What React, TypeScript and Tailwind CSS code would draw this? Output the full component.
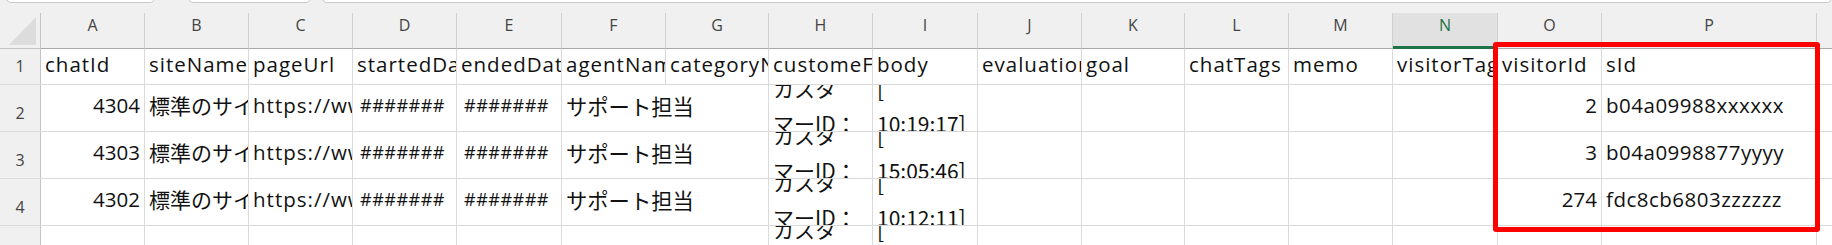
import React from "react";

type Col = { key: string; w: string };

const cols: Col[] = [
  { key: "A", w: "w-[104px]" },
  { key: "B", w: "w-[104px]" },
  { key: "C", w: "w-[104px]" },
  { key: "D", w: "w-[104px]" },
  { key: "E", w: "w-[105px]" },
  { key: "F", w: "w-[104px]" },
  { key: "G", w: "w-[103px]" },
  { key: "H", w: "w-[104px]" },
  { key: "I", w: "w-[105px]" },
  { key: "J", w: "w-[104px]" },
  { key: "K", w: "w-[103px]" },
  { key: "L", w: "w-[104px]" },
  { key: "M", w: "w-[104px]" },
  { key: "N", w: "w-[105px]" },
  { key: "O", w: "w-[104px]" },
  { key: "P", w: "w-[215px]" },
  { key: "", w: "w-[60px]" },
];

const headers = [
  "chatId",
  "siteName",
  "pageUrl",
  "startedDate",
  "endedDate",
  "agentName",
  "categoryName",
  "customeFields",
  "body",
  "evaluation",
  "goal",
  "chatTags",
  "memo",
  "visitorTags",
  "visitorId",
  "sId",
  "",
];

const rows = [
  { id: "4304", visitor: "2", sid: "b04a09988xxxxxx", time: "10:19:17]" },
  { id: "4303", visitor: "3", sid: "b04a0998877yyyy", time: "15:05:46]" },
  { id: "4302", visitor: "274", sid: "fdc8cb6803zzzzzz", time: "10:12:11]" },
];

const jp = { fontFamily: '"Noto Sans CJK JP", sans-serif' };

function Cell({
  w,
  children,
  right,
  noBorder,
  visible,
}: {
  w: string;
  children?: React.ReactNode;
  right?: boolean;
  noBorder?: boolean;
  visible?: boolean;
}) {
  return (
    <div
      className={`${w} shrink-0 flex items-center px-[4px] pb-[5px] whitespace-nowrap ${
        noBorder ? "" : "border-r border-[#dadada]"
      } ${visible ? "overflow-visible z-10" : "overflow-hidden"} ${
        right ? "justify-end" : "justify-start"
      }`}
    >
      {children}
    </div>
  );
}

function Wrapped({ w, top, bottom }: { w: string; top: string; bottom: string }) {
  return (
    <div
      className={`${w} shrink-0 overflow-hidden border-r border-[#dadada] px-[4px] whitespace-nowrap text-[21px] tracking-normal`}
      style={jp}
    >
      <div className="-mt-[14px] leading-[35px]">
        <div>{top}</div>
        <div>{bottom}</div>
      </div>
    </div>
  );
}

function RowNum({ n }: { n?: number }) {
  return (
    <div className="w-[41px] shrink-0 flex items-end justify-center pb-[8px] border-r border-[#c4c4c4] bg-[#f0f0f0] text-[16px] leading-[20px] tracking-normal text-[#444]">
      {n}
    </div>
  );
}

export default function App() {
  return (
    <div
      className="relative w-[1832px] h-[245px] overflow-hidden bg-[#f0f0f0] text-[20.5px] tracking-[1px] text-[#111]"
      style={{ fontFamily: '"Open Sans", "Noto Sans CJK JP", sans-serif' }}
    >
      {/* top toolbar edge */}
      <div className="flex h-[13px] items-start gap-[34px] pl-[6px]">
        <div className="-mt-[10px] h-[13px] w-[149px] rounded-b-[5px] border border-[#c9c9c9] bg-white" />
        <div className="-mt-[10px] h-[13px] w-[123px] -ml-[1px] rounded-b-[5px] border border-[#c9c9c9] bg-white" />
        <div className="-mt-[10px] -ml-[23px] h-[13px] flex-1 rounded-b-[5px] border border-[#c9c9c9] bg-white" />
      </div>

      {/* column headers */}
      <div className="flex h-[36px] tracking-normal">
        <div className="w-[41px] shrink-0 border-r border-b border-[#c4c4c4] flex items-end justify-end pr-[3px] pb-[3px]">
          <svg width="28" height="28" viewBox="0 0 28 28">
            <polygon points="27,0 27,28 0,28" fill="#dcdcdc" />
          </svg>
        </div>
        {cols.map((c) =>
          c.key === "N" ? (
            <div
              key={c.key}
              className={`${c.w} shrink-0 flex items-start justify-center pt-[2px] bg-[#e1e1e1] border-r border-[#d0d0d0] border-b-[3px] border-b-[#217346] text-[16px] leading-[20px] text-[#217346]`}
            >
              {c.key}
            </div>
          ) : (
            <div
              key={c.key || "q"}
              className={`${c.w} shrink-0 flex items-start justify-center pt-[2px] border-r border-b border-[#d0d0d0] border-b-[#a9a9a9] text-[16px] leading-[20px] text-[#444]`}
            >
              {c.key}
            </div>
          )
        )}
      </div>

      {/* row 1 */}
      <div className="flex h-[36px] bg-white border-b border-[#dadada]">
        <RowNum n={1} />
        {cols.map((c, i) => (
          <Cell key={c.key || "q"} w={c.w}>
            {headers[i]}
          </Cell>
        ))}
      </div>

      {rows.map((r, ri) => (
        <div key={r.id} className="flex h-[47px] bg-white border-b border-[#dadada]">
          <RowNum n={ri + 2} />
          <Cell w="w-[104px]" right>
            <span className="tracking-normal">{r.id}</span>
          </Cell>
          <Cell w="w-[104px]">
            <span className="text-[21px] tracking-normal" style={jp}>
              標準のサイト
            </span>
          </Cell>
          <Cell w="w-[104px]">https://www.example.com</Cell>
          <Cell w="w-[104px]">
            <span className="pl-[3px] text-[18px] tracking-[0.5px]">#######</span>
          </Cell>
          <Cell w="w-[105px]">
            <span className="pl-[3px] text-[18px] tracking-[0.5px]">#######</span>
          </Cell>
          <Cell w="w-[104px]" noBorder visible>
            <span className="text-[21.3px] tracking-normal" style={jp}>
              サポート担当
            </span>
          </Cell>
          <Cell w="w-[103px]" />
          <Wrapped w="w-[104px]" top="カスタ" bottom="マーID：" />
          <Wrapped w="w-[105px]" top="[" bottom={r.time} />
          <Cell w="w-[104px]" />
          <Cell w="w-[103px]" />
          <Cell w="w-[104px]" />
          <Cell w="w-[104px]" />
          <Cell w="w-[105px]" />
          <Cell w="w-[104px]" right>
            <span className="tracking-normal">{r.visitor}</span>
          </Cell>
          <Cell w="w-[215px]">
            <span className="tracking-[0.5px]">{r.sid}</span>
          </Cell>
          <Cell w="w-[60px]" />
        </div>
      ))}

      {/* partial row 5 */}
      <div className="flex h-[47px] bg-white border-b border-[#dadada]">
        <RowNum n={5} />
        <Cell w="w-[104px]" />
        <Cell w="w-[104px]" />
        <Cell w="w-[104px]" />
        <Cell w="w-[104px]" />
        <Cell w="w-[105px]" />
        <Cell w="w-[104px]" noBorder />
        <Cell w="w-[103px]" />
        <Wrapped w="w-[104px]" top="カスタ" bottom="マーID：" />
        <Wrapped w="w-[105px]" top="[" bottom="09:58:02]" />
        <Cell w="w-[104px]" />
        <Cell w="w-[103px]" />
        <Cell w="w-[104px]" />
        <Cell w="w-[104px]" />
        <Cell w="w-[105px]" />
        <Cell w="w-[104px]" />
        <Cell w="w-[215px]" />
        <Cell w="w-[60px]" />
      </div>

      {/* highlight box */}
      <div className="absolute left-[1493px] top-[42px] w-[327px] h-[190px] rounded-[3px] border-[5px] border-[#ff0000] pointer-events-none" />
    </div>
  );
}
